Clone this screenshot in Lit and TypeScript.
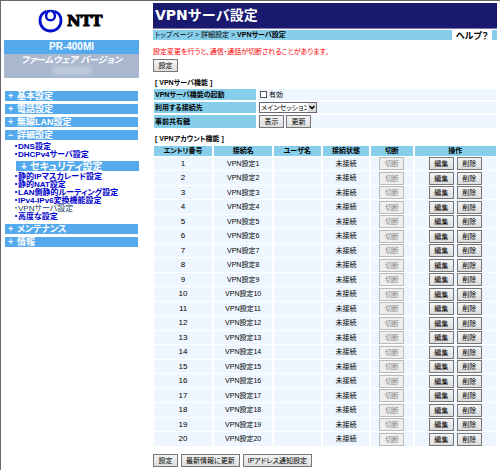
import { LitElement, html, css } from "lit";
import { customElement, state } from "lit/decorators.js";

interface Entry { id: number; name: string; user: string; status: string; }

const subTop = ["DNS設定", "DHCPv4サーバ設定"];
const subBottom = ["静的IPマスカレード設定", "静的NAT設定", "LAN側静的ルーティング設定", "IPv4-IPv6変換機能設定", "VPNサーバ設定", "高度な設定"];

@customElement("app-root")
export class AppRoot extends LitElement {
  @state() private entries: Entry[] = Array.from({ length: 20 }, (_, i) => ({
    id: i + 1, name: `VPN設定${i + 1}`, user: "", status: "未接続",
  }));

  static styles = css`
    :host {
      display: block;
      min-height: 100vh;
      box-sizing: border-box;
      border-top: 1px solid #66666e;
      border-left: 1px solid #66666e;
      background: #fff;
      color: #000;
      font: 8px/10px "Liberation Sans", "Noto Sans CJK JP", sans-serif;
      font-feature-settings: "palt";
    }
    * { box-sizing: border-box; }
    a { color: inherit; text-decoration: none; }
    .page { display: grid; grid-template-columns: 138px minmax(0, 1fr); column-gap: 14px; padding: 2px 3px 0 0; }
    .side { padding-left: 3px; }
    .logo { display: flex; align-items: center; gap: 4px; height: 33px; padding-top: 2px; margin: 0 0 4px 34px; font: bold 15px/20px "DejaVu Serif", serif; -webkit-text-stroke: 1px #000; }
    .logo svg { width: 25px; height: 25px; }
    .model { background: #55aaee; color: #fff; font-size: 10px; line-height: 14px; text-align: center; font-weight: bold; }
    .firmware { height: 24px; margin-bottom: 13px; background: #a9b8cf; color: #fff; text-align: center; font-size: 9px; line-height: 12px; font-style: italic; font-weight: bold; }
    .smudge { width: 38px; height: 7px; margin: 1px auto 0; background: #c3cddd; filter: blur(2px); }
    .nav { display: flex; flex-direction: column; padding: 0 1px; }
    .bar { display: block; height: 10px; margin-bottom: 3px; padding-left: 3px; background: #55aaee; color: #fff; font-size: 9px; line-height: 11px; font-weight: bold; white-space: nowrap; }
    .mark { display: inline-block; width: 9px; }
    .bar.inner { margin: 2px -1px 2px 11px; padding-left: 5px; font-size: 10px; }
    .subs { list-style: none; margin: 0; padding: 0 0 0 9px; color: #0000cc; font-size: 8px; line-height: 8px; font-weight: bold; white-space: nowrap; }
    .subs.last { margin-bottom: 3px; }
    .current { color: #224466; font-weight: normal; }
    .title { margin: 0; padding-left: 2px; background: #191970; color: #fff; font: bold 14px/25px "DejaVu Sans", "Noto Sans CJK JP", sans-serif; border-bottom: 1px solid #8877aa; }
    .crumbs { display: flex; align-items: stretch; height: 11px; padding: 1px 5px 0 0; background: linear-gradient(#fff 1px, #87ceeb 1px); white-space: nowrap; }
    .trail { flex: 1; padding-left: 2px; font-size: 7px; line-height: 9px; }
    .help { width: 40px; background: #fff; font-size: 9px; line-height: 12px; font-weight: bold; text-align: center; }
    .warning { margin: 7px 0 2px; color: #f00; line-height: 10px; white-space: nowrap; font-size: 7px; }
    button { flex: none; height: 13px; min-width: 25px; padding: 0 4px; border: 1px solid #777; background: linear-gradient(#f4f4f4, #ddd); color: #000; font: 7px/11px "Liberation Sans", "Noto Sans CJK JP", sans-serif; font-feature-settings: inherit; white-space: nowrap; }
    button:disabled { border-color: #bbb; color: #888; background: #eee; }
    .apply { display: block; }
    h2 { margin: 6px 0 1px; padding-left: 2px; font-size: 7px; line-height: 10px; font-weight: bold; }
    .settings { display: grid; row-gap: 2px; margin: 0 1px; }
    .setting { display: grid; grid-template-columns: 3fr 7fr; column-gap: 2px; min-height: 11px; }
    .setting.tall { min-height: 13px; }
    .label, .value { display: flex; align-items: center; }
    .label { padding-left: 1px; background: #87ceeb; font-weight: bold; font-size: 7px; }
    .value { gap: 2px; padding-left: 1px; background: #eef6ff; font-size: 7px; }
    .tick { appearance: none; width: 7px; height: 7px; margin: 0 0 0 1px; border: 1px solid #555; background: #fff; }
    .pick { position: relative; display: flex; }
    select { appearance: none; width: 58px; height: 11px; margin: 0; padding: 0 9px 0 1px; border: 1px solid #667; border-radius: 0; background: #fff; color: #000; font: 7px/9px "Noto Sans CJK JP", sans-serif; font-feature-settings: inherit; }
    .pick svg { position: absolute; right: 1px; top: 1px; width: 8px; height: 9px; background: #ddd; pointer-events: none; }
    .accounts { width: calc(100% + 2px); margin: 0 -1px; table-layout: fixed; border-collapse: separate; border-spacing: 2px 1px; font-size: 7px; line-height: 10px; text-align: center; }
    th, td { padding: 0; height: 13px; background: #eef6ff; white-space: nowrap; }
    tbody tr:nth-child(even) td { height: 14px; }
    th { height: 10px; background: #87ceeb; }
    td.id { font-size: 8px; }
    .no, .name { width: 17.5%; }
    .user { width: 14%; }
    .state { width: 14%; }
    .cut { width: 12.5%; }
    .cell { display: flex; justify-content: center; gap: 3px; }
    .footer { display: flex; gap: 3px; margin-top: 7px; }
  `;

  private link(text: string) {
    return html`<li><a href="#" class=${text === "VPNサーバ設定" ? "current" : ""}>・${text}</a></li>`;
  }

  private bar(mark: string, text: string, kind = "") {
    return html`<a href="#" class="bar ${kind}"><span class="mark">${mark}</span>${text}</a>`;
  }

  render() {
    return html`
      <div class="page">
        <aside class="side">
          <div class="logo">
            <svg viewBox="0 0 25 25" fill="none" stroke="#0011cc" aria-hidden="true">
              <path stroke-width="2.8" d="M8.5 3.2C4.5 4.6 2 8 2 12.5C2 18.5 6.5 23 12.5 23S23 18.5 23 12.5C23 8 20.5 4.6 16.5 3.2" />
              <path stroke-width="2.4" d="M12.5 3.2C15 2 16.9 5.5 16.9 8.2C16.9 10.7 15 12.3 12.5 12.3S8.1 10.7 8.1 8.2C8.1 5.5 10 2 12.5 3.2M8.5 3.2L10.5 3.4M16.5 3.2L14.5 3.4" />
            </svg>
            <span>NTT</span>
          </div>
          <div class="model">PR-400MI</div>
          <div class="firmware">ファームウェア バージョン<div class="smudge"></div></div>
          <nav class="nav">
            ${this.bar("+", "基本設定")}${this.bar("+", "電話設定")}${this.bar("+", "無線LAN設定")}
            ${this.bar("−", "詳細設定")}
            <ul class="subs">${subTop.map((t) => this.link(t))}</ul>
            ${this.bar("+", "セキュリティ設定", "inner")}
            <ul class="subs last">${subBottom.map((t) => this.link(t))}</ul>
            ${this.bar("+", "メンテナンス")}${this.bar("+", "情報")}
          </nav>
        </aside>
        <main>
          <h1 class="title">VPNサーバ設定</h1>
          <div class="crumbs">
            <div class="trail"><a href="#">トップページ</a> &gt; <a href="#">詳細設定</a> &gt; <b>VPNサーバ設定</b></div>
            <a class="help" href="#">ヘルプ？</a>
          </div>
          <p class="warning">設定変更を行うと、通信・通話が切断されることがあります。</p>
          <button class="apply">設定</button>
          <h2>[ VPNサーバ機能 ]</h2>
          <div class="settings">
            <div class="setting"><label class="label" for="enable">VPNサーバ機能の起動</label>
              <div class="value"><input class="tick" id="enable" type="checkbox" /><label for="enable">有効</label></div></div>
            <div class="setting"><label class="label" for="dest">利用する接続先</label>
              <div class="value"><span class="pick"><select id="dest"><option>メインセッション</option></select>
                <svg viewBox="0 0 8 9" fill="none" stroke="#000" stroke-width="1.6"><path d="M1.5 3L4 5.5L6.5 3" /></svg></span></div></div>
            <div class="setting tall"><span class="label">事前共有鍵</span>
              <div class="value"><button>表示</button><button>更新</button></div></div>
          </div>
          <h2>[ VPNアカウント機能 ]</h2>
          <table class="accounts">
            <thead><tr><th class="no">エントリ番号</th><th class="name">接続名</th><th class="user">ユーザ名</th><th class="state">接続状態</th><th class="cut">切断</th><th>操作</th></tr></thead>
            <tbody>
              ${this.entries.map((e) => html`<tr>
                <td class="id">${e.id}</td><td>${e.name}</td><td>${e.user}</td><td>${e.status}</td>
                <td><div class="cell"><button disabled>切断</button></div></td>
                <td><div class="cell"><button>編集</button><button>削除</button></div></td>
              </tr>`)}
            </tbody>
          </table>
          <div class="footer"><button>設定</button><button>最新情報に更新</button><button>IPアドレス通知設定</button></div>
        </main>
      </div>
    `;
  }
}
